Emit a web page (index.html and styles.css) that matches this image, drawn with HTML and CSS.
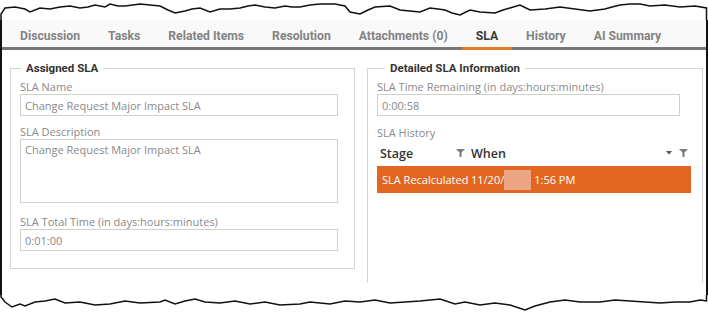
FILE: index.html
```html
<!DOCTYPE html>
<html lang="en">
<head>
<meta charset="UTF-8">
<meta name="viewport" content="width=device-width, initial-scale=1.0">
<title>SLA</title>
<link rel="stylesheet" href="styles.css">
</head>
<body>
  <div class="page">
    <!-- torn paper edge, top -->
    <svg class="edge" width="708" height="20" viewBox="0 0 708 20">
      <polyline class="edgeLine" points="1,20 1,14 5,8 15,7 25,9 30,12 40,8 50,9 60,7 70,6 80,8 88,7 95,5 105,7 110,4 118,6 125,6 133,5 140,4 150,5 160,6 168,10 175,13 185,11 192,9 200,8 210,12 220,9 230,9 240,8 248,6 255,5 265,7 275,8 285,6 292,7 300,7 310,5 320,4 335,4 345,6 350,12 360,14 368,10 375,7 390,6 400,10 410,11 420,12 430,8 438,9 445,10 452,13 460,15 470,10 480,12 495,13 503,10 510,8 520,5 530,10 545,9 560,7 575,9 590,11 605,9 612,7 620,5 630,4 640,4 650,6 665,5 680,7 695,6 706.5,8 706.5,20"/>
    </svg>

    <div class="frame">
      <nav class="tabs">
        <span class="tab">Discussion</span>
        <span class="tab">Tasks</span>
        <span class="tab">Related Items</span>
        <span class="tab">Resolution</span>
        <span class="tab">Attachments (0)</span>
        <span class="tab active">SLA</span>
        <span class="tab">History</span>
        <span class="tab">AI Summary</span>
      </nav>

      <div class="panels">
        <fieldset class="box boxAssigned">
          <legend>Assigned SLA</legend>
          <div class="field">
            <label for="slaName">SLA Name</label>
            <input type="text" id="slaName" value="Change Request Major Impact SLA" readonly>
          </div>
          <div class="field fieldTall">
            <label for="slaDesc">SLA Description</label>
            <textarea id="slaDesc" readonly>Change Request Major Impact SLA</textarea>
          </div>
          <div class="field">
            <label for="slaTotal">SLA Total Time (in days:hours:minutes)</label>
            <input type="text" id="slaTotal" value="0:01:00" readonly>
          </div>
        </fieldset>

        <fieldset class="box boxDetail">
          <legend>Detailed SLA Information</legend>
          <div class="field">
            <label for="slaRemaining">SLA Time Remaining (in days:hours:minutes)</label>
            <input type="text" id="slaRemaining" class="shortInput" value="0:00:58" readonly>
          </div>
          <div class="historyLabel">SLA History</div>
          <div class="grid">
            <div class="gridHead">
              <div class="colStage">
                <span>Stage</span>
                <svg class="filterIcon" width="9" height="8" viewBox="0 0 9 8"><polygon points="0,0 9,0 5.5,3.5 5.5,8 3.5,8 3.5,3.5"/></svg>
              </div>
              <div class="colWhen">
                <span>When</span>
                <span class="headIcons">
                  <svg class="caretIcon" width="6" height="4" viewBox="0 0 6 4"><polygon points="0,0 6,0 3,3.5"/></svg>
                  <svg class="filterIcon" width="9" height="8" viewBox="0 0 9 8"><polygon points="0,0 9,0 5.5,3.5 5.5,8 3.5,8 3.5,3.5"/></svg>
                </span>
              </div>
            </div>
            <div class="gridRow">
              <div class="colStage">SLA Recalculated</div>
              <div class="colWhen">11/20/<span class="blurred"></span>1:56 PM</div>
            </div>
          </div>
        </fieldset>
      </div>
    </div>

    <!-- torn paper edge, bottom -->
    <svg class="edge" width="708" height="19" viewBox="0 0 708 19">
      <polyline class="edgeLine" points="1,0 1,2 5,7 12,12 20,9 25,11 35,7 45,6 55,4 65,8 80,7 95,10 110,9 125,6 140,8 160,7 165,5 175,9 185,6 195,4 205,7 220,8 235,6 250,9 265,7 280,10 300,9 310,7 330,9 345,6 360,7 375,5 390,8 405,7 420,6 440,4 455,9 465,7 480,10 495,8 510,10 525,15 535,11 550,7 565,5 580,7 600,7 615,5 630,6 645,7 660,8 675,7 690,7 700,5 706.5,6 706.5,0"/>
    </svg>
  </div>
</body>
</html>
```

FILE: styles.css
```css
body {
  margin: 0;
  background-color: #ffffff;
  font-family: "Open Sans", Arial, sans-serif;
}

.page {
  width: 708px;
}

.edge {
  display: block;
}

.edgeLine {
  fill: none;
  stroke: #111;
  stroke-width: 1.5;
}

/* paper frame between the torn edges */
.frame {
  height: 275px;
  width: 708px;
  box-sizing: border-box;
  border-left: 2px solid #111;
  border-right: 2px solid #111;
}

/* Tab strip */
.tabs {
  display: flex;
  padding-left: 4px;
  background-color: #f9f9f9;
  border-bottom: 3px solid #777;
}

.tab {
  padding: 8px 14px 3px;
  margin-bottom: -3px;
  border-bottom: 3px solid transparent;
  font-family: Roboto, Arial, sans-serif;
  font-size: 12.2px;
  line-height: 16px;
  font-weight: bold;
  color: #838383;
}

.tab.active {
  color: #3a3a3a;
  border-bottom-color: #e0782a;
}

/* Panels */
.panels {
  display: flex;
  align-items: flex-start;
  padding-top: 10px;
}

.box {
  margin: 0;
  border: 1px solid #d4d4d4;
  box-sizing: border-box;
  min-width: 0;
}

.box legend {
  font-family: Roboto, Arial, sans-serif;
  font-size: 11.5px;
  line-height: 16px;
  font-weight: bold;
  color: #333;
  padding: 0 5px;
}

.boxAssigned {
  margin-left: 8px;
  width: 345px;
  padding: 4px 16px 17px 9px;
}

.boxAssigned legend {
  margin-left: 1px;
}

.boxDetail {
  margin-left: 12px;
  width: 336px;
  height: 223px;
  padding: 4px 11px 0 9px;
  border-bottom: none;
}

.boxDetail legend {
  margin-left: 8px;
}

/* Form fields */
.field {
  margin-bottom: 9px;
}

.field:last-child {
  margin-bottom: 0;
}

.fieldTall {
  margin-bottom: 12px;
}

.field label,
.historyLabel {
  display: block;
  font-size: 11px;
  line-height: 14px;
  color: #8a8a8a;
}

.field input,
.field textarea {
  display: block;
  width: 100%;
  box-sizing: border-box;
  margin: 0;
  border: 1px solid #cdd2cd;
  padding: 0 4px;
  font-family: "Open Sans", Arial, sans-serif;
  font-size: 11px;
  color: #8a8a8a;
  background-color: #fff;
  outline: none;
}

.field input {
  height: 22px;
}

.field textarea {
  height: 64px;
  padding-top: 2px;
  resize: none;
}

.field input.shortInput {
  width: 303px;
}

.historyLabel {
  margin-top: 10px;
}

/* SLA history grid */
.gridHead {
  display: flex;
  height: 26px;
  align-items: center;
  font-weight: 600;
  font-size: 12.5px;
  color: #333;
}

.gridHead .colStage {
  padding-left: 3px;
  padding-right: 2px;
  justify-content: space-between;
}

.colStage {
  display: flex;
  align-items: center;
  width: 90px;
  box-sizing: border-box;
  white-space: nowrap;
}

.colWhen {
  display: flex;
  align-items: center;
  flex: 1;
  padding-left: 4px;
  white-space: nowrap;
}

.headIcons {
  margin-left: auto;
  margin-right: 3px;
  display: flex;
  align-items: center;
  gap: 7px;
}

.filterIcon {
  fill: #7a7a7a;
}

.caretIcon {
  fill: #555;
}

.gridRow {
  display: flex;
  height: 27px;
  background-color: #e2661f;
  color: #fff;
  font-size: 11px;
  font-weight: 500;
}

.gridRow .colStage {
  padding-left: 5px;
}

.blurred {
  display: inline-block;
  width: 27px;
  height: 20px;
  background-color: #eaa583;
  margin-right: 3px;
}
```
